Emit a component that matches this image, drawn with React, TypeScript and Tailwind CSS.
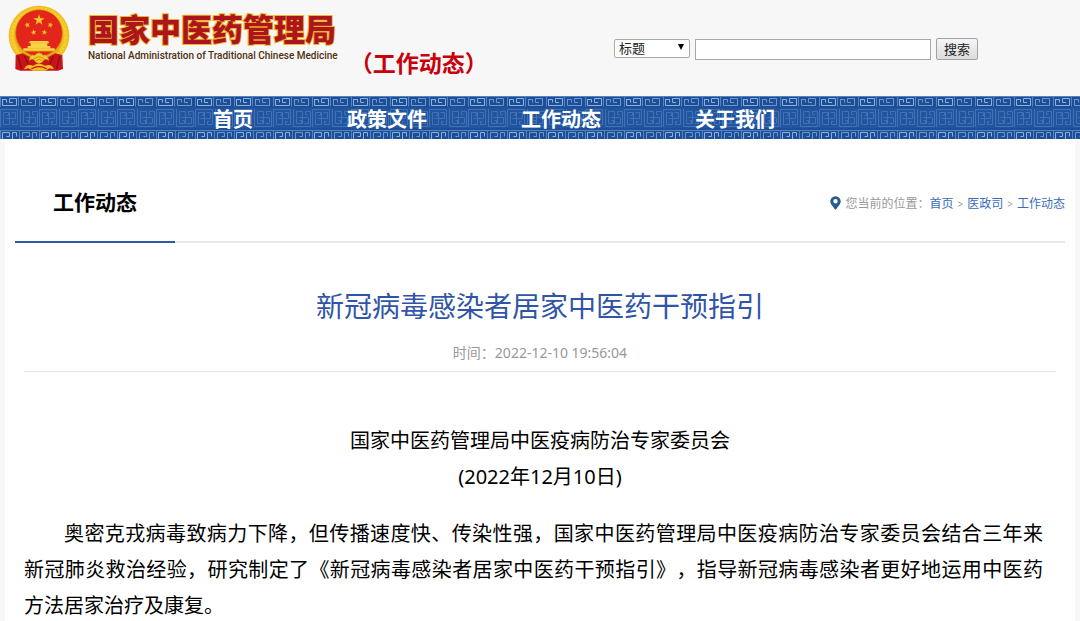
import React from "react";

const navItems = ["首页", "政策文件", "工作动态", "关于我们"];
const crumbs = ["首页", "医政司", "工作动态"];

const STAR = "M0-10 2.4-3.2 9.5-3.1 3.8 1.2 5.9 8.1 0 4-5.9 8.1-3.8 1.2-9.5-3.1-2.4-3.2Z";

function Emblem() {
  return (
    <svg viewBox="0 0 186 198" className="h-[66px] w-[62px] shrink-0" aria-hidden="true">
      <defs>
        <radialGradient id="ring" cx="50%" cy="50%" r="50%">
          <stop offset="0.76" stopColor="#e8a814" />
          <stop offset="0.88" stopColor="#f9d630" />
          <stop offset="1" stopColor="#efb81c" />
        </radialGradient>
      </defs>
      <ellipse cx="93" cy="92" rx="91" ry="90" fill="url(#ring)" />
      <ellipse cx="93" cy="92" rx="82" ry="81" fill="none" stroke="#dd9c12" strokeWidth="5" strokeDasharray="3 8" opacity="0.45" />
      <ellipse cx="93" cy="84" rx="70" ry="70" fill="#e3251b" stroke="#c9860f" strokeWidth="2" />
      <g fill="#f8c723">
        <path d={STAR} transform="translate(93 45) scale(1.75)" />
        <path d={STAR} transform="translate(58 60) rotate(-20) scale(.9)" />
        <path d={STAR} transform="translate(127 60) rotate(20) scale(.9)" />
        <path d={STAR} transform="translate(77 82) rotate(-10) scale(.9)" />
        <path d={STAR} transform="translate(109 82) rotate(10) scale(.9)" />
      </g>
      <path d="M66 108H120L124 114H118V123H127V130H140V138H46V130H59V123H68V114H62Z" fill="#f9d546" />
      <path d="M64 114H122M58 130H128" stroke="#eeb42a" strokeWidth="2" />
      <path d="M30 138H156" stroke="#e9a717" strokeWidth="3" />
      <path d="M23 150 44 145 70 158 93 176 116 158 142 145 163 150 165 192 150 197H36L22 192Z" fill="#c9151a" />
      <path d="M30 153 41 193M50 152 60 178M156 153 145 193M136 152 126 178" stroke="#8f0d12" strokeWidth="4" />
      <path d="M64 166Q66 146 80 151Q93 136 106 151Q120 146 122 166Q108 158 104 170Q93 180 82 170Q78 158 64 166Z" fill="#f6ca2e" stroke="#cc8412" strokeWidth="2" />
      <path d="M76 163Q93 148 110 163M84 167Q93 158 102 167" fill="none" stroke="#d78f14" strokeWidth="3" />
      <path d="M48 193Q56 174 75 182Q93 170 111 182Q130 174 138 193L124 190 112 197H74L62 190Z" fill="#f3bd24" />
      <path d="M70 192Q93 178 116 192" fill="none" stroke="#c9151a" strokeWidth="4" />
    </svg>
  );
}

function MeanderBackground() {
  return (
    <svg className="absolute inset-0 h-full w-full" aria-hidden="true">
      <defs>
        <pattern id="edge" width="39" height="11" patternUnits="userSpaceOnUse">
          <g fill="none" strokeWidth="1">
            <path d="M2.5 3V9.5H16.5V2.5H9.5V6.5H13M2.5 3.5H6.5V6.5" stroke="#8fb0da" />
            <path d="M21.5 3V9.5H35.5V2.5H28.5V6.5H32M21.5 3.5H25.5V6.5" stroke="#6f97cb" />
            <path d="M0 .5H39M0.5 1V10.5M18.5 1V10.5" stroke="#5583c1" />
          </g>
        </pattern>
        <pattern id="edgeLow" width="39" height="11" patternUnits="userSpaceOnUse" y="32">
          <g fill="none" strokeWidth="1">
            <path d="M2.5 11V4.5H9.5V8.5H6.5M12.5 11V4.5H16.5V8.5" stroke="#8fb0da" />
            <path d="M22.5 11V4.5H29.5V8.5H26.5M32.5 11V4.5H36.5V8.5" stroke="#6f97cb" />
            <path d="M0 2.5H39M0.5 2V11M19.5 2V11" stroke="#5583c1" />
          </g>
        </pattern>
        <pattern id="middle" width="39" height="20" patternUnits="userSpaceOnUse" y="12">
          <g fill="none" stroke="#4272b4" strokeWidth="1">
            <path d="M0.5 19V1.5H17.5V16.5H12.5V13.5H14.5M3.5 17V4.5H8.5V7.5H6.5M9.5 4V16.5H4.5M5.5 10.5H15.5V4.5H11.5" />
            <path d="M20.5 1V18.5H37.5V3.5H32.5V6.5H34.5M23.5 3V15.5H28.5V12.5H26.5M29.5 16V3.5H24.5M25.5 9.5H35.5V15.5H31.5" />
          </g>
        </pattern>
      </defs>
      <rect width="100%" height="43" fill="#1c4f98" />
      <rect y="12" width="100%" height="20" fill="#2155a0" />
      <rect width="100%" height="11" fill="url(#edge)" />
      <rect y="12" width="100%" height="20" fill="url(#middle)" />
      <rect y="32" width="100%" height="11" fill="url(#edgeLow)" />
    </svg>
  );
}

function Header() {
  return (
    <header className="flex h-24 items-start pl-2">
      <div className="flex gap-[18px] pt-[5px]">
        <Emblem />
        <div className="pt-[6px]">
          <h1 className="whitespace-nowrap text-[31px] font-black leading-[36px] text-[#ab151b] [-webkit-text-stroke:2px_#f0b42c] [paint-order:stroke_fill]">
            国家中医药管理局
          </h1>
          <p className="whitespace-nowrap font-['Roboto',sans-serif] text-[10px] font-medium leading-[18px] text-[#4f300f]">
            National Administration of Traditional Chinese Medicine
          </p>
        </div>
      </div>
      <p className="ml-3 whitespace-nowrap pt-12 text-[23px] font-bold leading-[30px] text-[#c7000b]">（工作动态）</p>
      <form className="ml-auto mr-[102px] flex items-center gap-[5px] pt-[38px] text-[13px] text-[#222]" onSubmit={(e) => e.preventDefault()}>
        <div className="relative mb-[2px]">
          <select aria-label="搜索范围" className="block h-[19px] w-[76px] appearance-none rounded-[2px] border border-[#a9a9a9] bg-white pl-1 leading-[17px]">
            <option>标题</option>
          </select>
          <svg viewBox="0 0 6 6" className="pointer-events-none absolute right-[6px] top-[5px] h-[6px] w-[6px]" aria-hidden="true">
            <path d="M0 0H6L3 6Z" fill="#000" />
          </svg>
        </div>
        <input type="text" aria-label="关键词" className="h-[21px] w-[236px] border border-[#a9a9a9] bg-white px-1" />
        <button type="submit" className="h-[22px] w-[42px] rounded-[2px] border border-[#a3a3a3] bg-linear-to-b from-[#f5f5f5] to-[#dcdcdc] leading-[20px]">
          搜索
        </button>
      </form>
    </header>
  );
}

export default function App() {
  return (
    <div className="min-h-screen bg-[#f7f7f7] font-['Noto_Sans','Noto_Sans_CJK_SC',sans-serif]" lang="zh-CN">
      <Header />
      <nav className="relative h-[43px]">
        <MeanderBackground />
        <ul className="relative flex h-full items-center gap-[94px] pl-[213px] pt-1">
          {navItems.map((item) => (
            <li key={item}>
              <a href="#" className="whitespace-nowrap text-[20px] font-bold text-white">{item}</a>
            </li>
          ))}
        </ul>
      </nav>

      <main className="mx-[5px] bg-white px-[10px] text-black">
        <div className="flex items-end justify-between border-b-2 border-[#e9e9e9] pt-[45px]">
          <h2 className="-mb-[2px] w-40 border-b-2 border-[#2f57a8] pb-[21px] text-center text-[21px] font-bold leading-[36px]">工作动态</h2>
          <div className="mb-[27px] flex items-center text-[12px] leading-[20px] text-[#999]">
            <svg viewBox="0 0 12 15" className="mr-1 h-[14px] w-[11px] -translate-y-px" aria-hidden="true">
              <path fillRule="evenodd" d="M6 0A5.7 5.7 0 0 0 .3 5.7C.3 9 4 12.5 6 15 8 12.5 11.7 9 11.7 5.7A5.7 5.7 0 0 0 6 0ZM6 3.2A2.4 2.4 0 1 1 6 8 2.4 2.4 0 0 1 6 3.2Z" fill="#285a94" />
            </svg>
            <span>您当前的位置：</span>
            {crumbs.map((c, i) => (
              <React.Fragment key={c}>
                {i > 0 && <span className="px-1 text-[10px]">&gt;</span>}
                <a href="#" className="text-[#386cbc]">{c}</a>
              </React.Fragment>
            ))}
          </div>
        </div>

        <article className="px-[9px]">
          <div className="border-b border-[#e5e5e5] pb-2 pt-[42px] text-center">
            <h3 className="text-[28px] leading-[42px] text-[#3155a6]">新冠病毒感染者居家中医药干预指引</h3>
            <p className="mt-4 text-[14px] leading-[20px] text-[#999]">时间：2022-12-10 19:56:04</p>
          </div>
          <div className="pt-[51px] text-[20px] leading-[36px]">
            <p className="text-center">
              国家中医药管理局中医疫病防治专家委员会
              <br />
              (2022年12月10日)
            </p>
            <p className="mt-[21px] pr-[13px] text-justify indent-[40px] [text-spacing-trim:space-all]">
              奥密克戎病毒致病力下降，但传播速度快、传染性强，国家中医药管理局中医疫病防治专家委员会结合三年来新冠肺炎救治经验，研究制定了《新冠病毒感染者居家中医药干预指引》，指导新冠病毒感染者更好地运用中医药方法居家治疗及康复。
            </p>
          </div>
        </article>
      </main>
    </div>
  );
}
